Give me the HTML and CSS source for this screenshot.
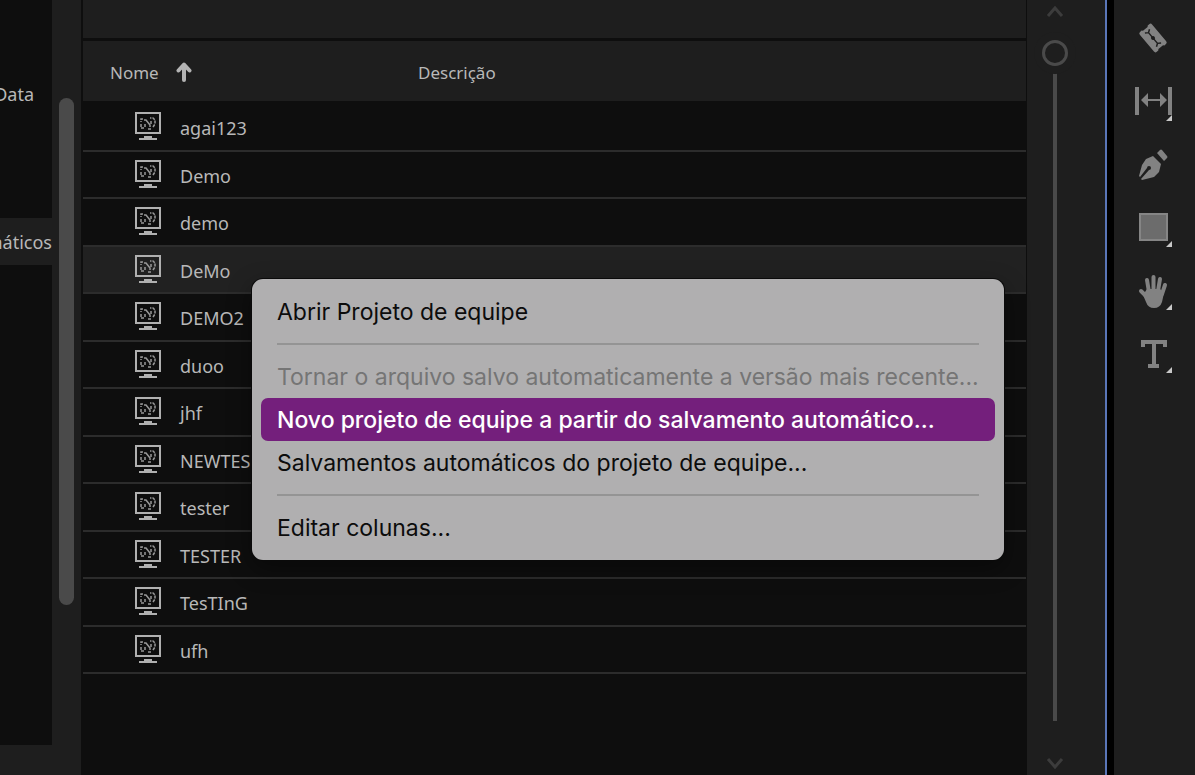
FILE: index.html
```
<!DOCTYPE html>
<html lang="pt-BR">
<head>
  <meta charset="UTF-8">
  <title>Projetos de equipe</title>
  <link rel="stylesheet" href="styles.css">
</head>
<body>

<!-- shared icons -->
<svg class="defs" aria-hidden="true">
  <symbol id="project" viewBox="0 0 26 29">
    <path fill="none" stroke="#b0b0b0" stroke-width="2" d="M1 1h24v20H1z"/>
    <path fill="#b0b0b0" d="M9 24h8v2h5v2H4v-2h5z"/>
    <g fill="none" stroke="#989898" stroke-width="1.5">
      <path d="M8 7H6v3M6 12v4h4M13 17h3M18 15l2-3V8l-2-2h-3" stroke-dasharray="3 1"/>
      <path d="M9 8h2l4 5v2M10 15v-3M16 12V9"/>
    </g>
  </symbol>
  <symbol id="more" viewBox="0 0 6 6"><path fill="#c8c8c8" d="M6 0v6H0z"/></symbol>
</svg>

<div id="app">
  <nav id="sidebar">
    <ul>
      <li><a href="#data">Data</a></li>
      <li class="active"><a href="#automaticos">máticos</a></li>
    </ul>
    <div class="scrollbar"></div>
  </nav>

  <main id="projects">
    <div class="panel-top"></div>
    <table>
      <thead>
        <tr>
          <th class="name">Nome
            <svg class="sort" width="16" height="20" viewBox="0 0 16 20"><path fill="none" stroke="#b4b4b4" stroke-width="4" stroke-linecap="round" stroke-linejoin="round" d="M8 18V4M2.5 8.500L8 2.500l5.500 6"/></svg>
          </th>
          <th>Descrição</th>
        </tr>
      </thead>
      <tbody>
        <tr><td><svg class="icon"><use href="#project"/></svg>agai123</td><td></td></tr>
        <tr><td><svg class="icon"><use href="#project"/></svg>Demo</td><td></td></tr>
        <tr><td><svg class="icon"><use href="#project"/></svg>demo</td><td></td></tr>
        <tr class="selected"><td><svg class="icon"><use href="#project"/></svg>DeMo</td><td></td></tr>
        <tr><td><svg class="icon"><use href="#project"/></svg>DEMO2</td><td></td></tr>
        <tr><td><svg class="icon"><use href="#project"/></svg>duoo</td><td></td></tr>
        <tr><td><svg class="icon"><use href="#project"/></svg>jhf</td><td></td></tr>
        <tr><td><svg class="icon"><use href="#project"/></svg>NEWTES</td><td></td></tr>
        <tr><td><svg class="icon"><use href="#project"/></svg>tester</td><td></td></tr>
        <tr><td><svg class="icon"><use href="#project"/></svg>TESTER</td><td></td></tr>
        <tr><td><svg class="icon"><use href="#project"/></svg>TesTInG</td><td></td></tr>
        <tr><td><svg class="icon"><use href="#project"/></svg>ufh</td><td></td></tr>
      </tbody>
    </table>

    <div id="context-menu" role="menu">
      <button role="menuitem">Abrir Projeto de equipe</button>
      <hr>
      <button role="menuitem" disabled>Tornar o arquivo salvo automaticamente a versão mais recente...</button>
      <button role="menuitem" class="highlight">Novo projeto de equipe a partir do salvamento automático...</button>
      <button role="menuitem">Salvamentos automáticos do projeto de equipe...</button>
      <hr>
      <button role="menuitem">Editar colunas...</button>
    </div>
  </main>

  <div id="track-zoom">
    <button aria-label="Para cima"><svg width="18" height="12" viewBox="0 0 18 12"><path d="M2 10l7-8 7 8"/></svg></button>
    <input type="range" min="0" max="100" value="0" aria-label="Rolagem">
    <button aria-label="Para baixo"><svg width="18" height="12" viewBox="0 0 18 12"><path d="M2 2l7 8 7-8"/></svg></button>
  </div>

  <div id="tools">
    <button aria-label="Fatiar">
      <svg width="40" height="40" viewBox="0 0 40 40">
        <g transform="translate(20 19) rotate(50)">
          <path fill="#828282" d="M-11-8h22a2 2 0 0 1 2 2v2l-1 1v6l1 1v2a2 2 0 0 1-2 2h-22a2 2 0 0 1-2-2v-2l1-1v-6l-1-1v-2a2 2 0 0 1 2-2z"/>
          <path fill="none" stroke="#1e1e1e" stroke-width="1.500" d="M-9-3l2 3-2 3M9-3L7 0l2 3M-7 0H7"/>
          <circle r="2" fill="#1e1e1e"/>
        </g>
      </svg>
    </button>
    <button aria-label="Deslizar">
      <svg width="40" height="40" viewBox="0 0 40 40">
        <path fill="#828282" d="M2 5h4v28H2zM35 5h4v28h-4zM8 18l7-7v6h12v-6l7 7-7 7v-6H15v6z"/>
      </svg>
      <svg class="more"><use href="#more"/></svg>
    </button>
    <button aria-label="Caneta">
      <svg width="40" height="40" viewBox="0 0 40 40">
        <path fill="#828282" d="M27 5q1-1 2 0l5 6q1 1 0 2l-3 3-7-8zM20 11l8 8-2 8-5 5-12 3-1-1 8-9a2 2 0 1 0-2-2l-7 9-1-1 3-11 4-6z"/>
      </svg>
    </button>
    <button aria-label="Retângulo">
      <svg width="40" height="40" viewBox="0 0 40 40"><path fill="#6c6c6c" stroke="#858585" stroke-width="2" d="M7 6h27v26H7z"/></svg>
      <svg class="more"><use href="#more"/></svg>
    </button>
    <button aria-label="Mão">
      <svg width="40" height="40" viewBox="0 0 40 40">
        <g fill="none" stroke="#828282" stroke-width="4" stroke-linecap="round">
          <path d="M16 21L14 9M20.500 20V6M25 20l2-12M29 23l3-9M15 27l-7-7"/>
        </g>
        <path fill="#828282" d="M14 18h13l4 4-2 9q-2 6-8 6-6 0-8-6l-3-7z"/>
      </svg>
      <svg class="more"><use href="#more"/></svg>
    </button>
    <button aria-label="Texto">
      <svg width="40" height="40" viewBox="0 0 40 40"><path fill="#828282" d="M8 6h26v7h-4v-3h-7v20h3v4H15v-4h4V10h-7v3H8z"/></svg>
      <svg class="more"><use href="#more"/></svg>
    </button>
  </div>
</div>

</body>
</html>
```
FILE: styles.css
```
* {
  box-sizing: border-box;
}

html, body {
  height: 100%;
  margin: 0;
  overflow: hidden;
  background: #1e1e1e;
  color: #b8b8b8;
  font: 18px/28px "Noto Sans", sans-serif;
}

button {
  display: block;
  margin: 0;
  padding: 0;
  border: none;
  background: transparent;
  color: inherit;
  font: inherit;
}

svg {
  display: block;
}

.defs {
  display: none;
}

#app {
  display: flex;
  height: 100%;
}

/* left list */

#sidebar {
  display: flex;
  gap: 7px;
  width: 81px;
  flex: none;
}

#sidebar ul {
  width: 52px;
  margin: 0 0 30px;
  padding: 70px 0 0;
  overflow: hidden;
  list-style: none;
  background: #0e0e0e;
}

#sidebar li {
  display: flex;
  align-items: center;
  justify-content: flex-end;
  height: 47px;
  padding-right: 18px;
}

#sidebar .active {
  margin-top: 101px;
  padding-right: 0;
  background: #1e1e1e;
}

#sidebar a {
  color: inherit;
  text-decoration: none;
}

.scrollbar {
  width: 15px;
  height: 507px;
  margin-top: 98px;
  border-radius: 8px;
  background: #4a4a4a;
}

/* project list */

#projects {
  position: relative;
  flex: 1;
  border: solid #0e0e0e;
  border-width: 0 1px 0 2px;
  background: #0e0e0e;
}

.panel-top {
  height: 41px;
  border-bottom: 3px solid #0e0e0e;
  background: #1e1e1e;
}

table {
  width: 100%;
  border-collapse: collapse;
  table-layout: fixed;
}

th {
  height: 60px;
  padding: 4px 0 0 27px;
  background: #1e1e1e;
  font-size: 17px;
  font-weight: normal;
  text-align: left;
}

th.name {
  width: 308px;
}

.sort {
  display: inline-block;
  margin-left: 13px;
  vertical-align: -3px;
}

td {
  height: 47px;
  padding: 0 0 0 52px;
  border-bottom: 2px solid #2c2c2c;
  white-space: nowrap;
}

tbody tr:nth-child(odd) td {
  height: 48px;
}

tbody tr:first-child td {
  height: 50px;
  padding-top: 2px;
}

.selected {
  background: #212121;
}

.icon {
  display: inline-block;
  width: 26px;
  height: 29px;
  margin-right: 19px;
  vertical-align: -6px;
}

/* context menu */

#context-menu {
  position: absolute;
  top: 279px;
  left: 169px;
  width: 752px;
  padding: 11px 9px;
  border-radius: 11px;
  background: #b0afb0;
  box-shadow: 0 0 0 1px #0a0a0a, 0 8px 24px rgba(0, 0, 0, 0.4);
  color: #0c0c0c;
  font: 23px/41px Inter, sans-serif;
}

#context-menu button {
  width: 100%;
  padding: 2px 16px 0;
  border-radius: 7px;
  text-align: left;
  white-space: nowrap;
}

#context-menu button:disabled {
  color: #757575;
}

#context-menu .highlight {
  background: #741f7c;
  color: #fff;
  font-weight: 500;
}

#context-menu hr {
  height: 2px;
  margin: 10px 16px;
  border: none;
  background: #949494;
}

/* vertical scroller */

#track-zoom {
  display: flex;
  flex-direction: column;
  align-items: center;
  width: 80px;
  padding: 6px 23px 6px 0;
  border-right: 2px solid #5a76b8;
}

#track-zoom path {
  fill: none;
  stroke: #3c3c3c;
  stroke-width: 3px;
}

#track-zoom input {
  flex: 1;
  width: 26px;
  margin: 22px 0 36px;
  appearance: none;
  background: transparent;
  writing-mode: vertical-lr;
}

#track-zoom input::-webkit-slider-runnable-track {
  width: 26px;
  background: linear-gradient(#4a4a4a, #4a4a4a) center / 4px 100% no-repeat;
}

#track-zoom input::-webkit-slider-thumb {
  width: 26px;
  height: 26px;
  appearance: none;
  border: 3px solid #4a4a4a;
  border-radius: 50%;
  background: #1e1e1e;
  box-shadow: 0 0 0 8px #1e1e1e;
}

/* tool column */

#tools {
  display: flex;
  flex-direction: column;
  gap: 23px;
  flex: none;
  width: 88px;
  padding: 19px 0 0 19px;
  border-left: 7px solid #000;
}

#tools button {
  position: relative;
  width: 40px;
  height: 40px;
}

#tools .more {
  position: absolute;
  right: 1px;
  bottom: 1px;
  width: 6px;
  height: 6px;
}
```
